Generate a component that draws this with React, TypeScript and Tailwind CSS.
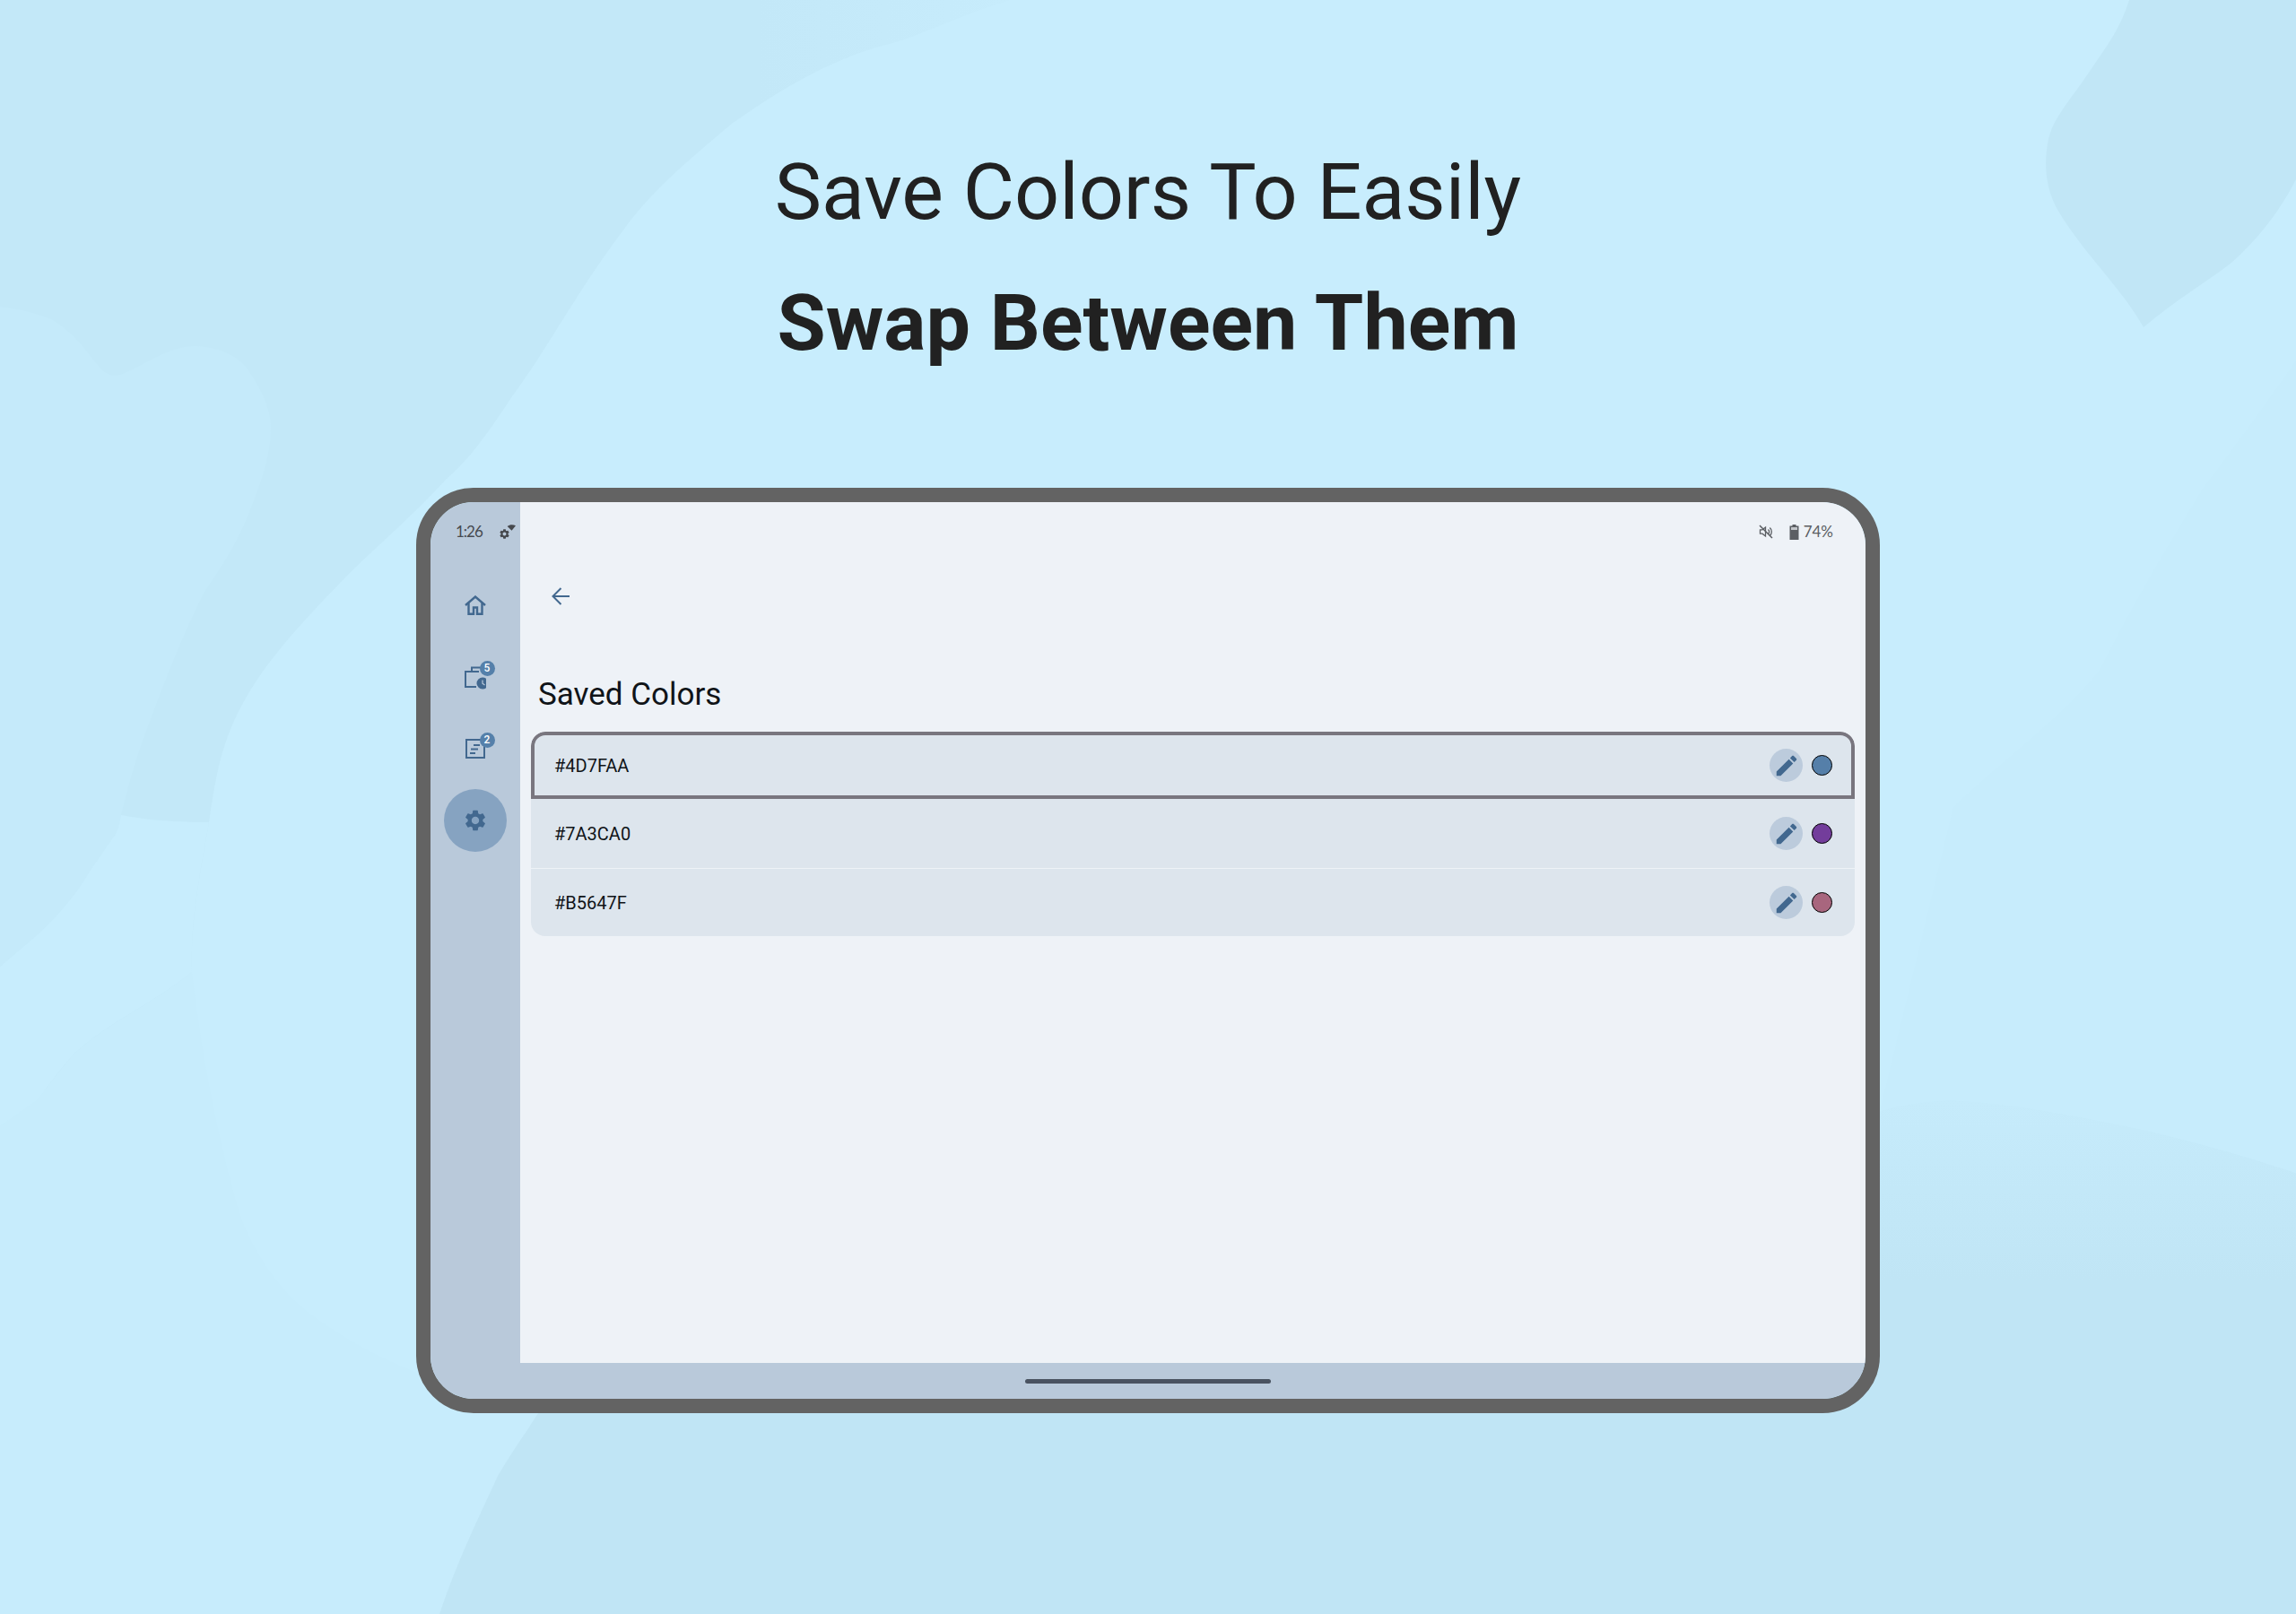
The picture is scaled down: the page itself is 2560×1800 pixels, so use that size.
import React from "react";

const savedColors = [
  { hex: "#4D7FAA", dot: "#557fa9", selected: true },
  { hex: "#7A3CA0", dot: "#733d9b", selected: false },
  { hex: "#B5647F", dot: "#a8667e", selected: false },
];

const GEAR_PATH =
  "M19.140 12.940c.04-.3.06-.61.06-.94 0-.32-.02-.64-.07-.94l2.030-1.580c.18-.14.23-.41.12-.61l-1.920-3.320c-.12-.22-.37-.29-.59-.22l-2.390.96c-.5-.38-1.030-.7-1.620-.94l-.36-2.540c-.04-.24-.24-.41-.48-.41h-3.840c-.24 0-.43.17-.47.41l-.36 2.540c-.59.24-1.130.57-1.620.94l-2.390-.96c-.22-.08-.47 0-.59.22L2.740 8.870c-.12.21-.08.47.12.61l2.030 1.580c-.05.3-.09.63-.09.94s.02.64.07.94l-2.030 1.580c-.18.14-.23.41-.12.61l1.920 3.320c.12.22.37.29.59.22l2.390-.96c.5.38 1.030.7 1.620.94l.36 2.540c.05.24.24.41.48.41h3.840c.24 0 .44-.17.47-.41l.36-2.540c.59-.24 1.130-.56 1.620-.94l2.390.96c.22.08.47 0 .59-.22l1.920-3.320c.12-.22.07-.47-.12-.61l-2.010-1.580zM12 15.600c-1.980 0-3.600-1.620-3.600-3.600s1.620-3.600 3.600-3.600 3.600 1.620 3.600 3.600-1.620 3.600-3.600 3.600z";

const Backdrop = () => (
  <svg className="absolute inset-0" width="2560" height="1800" viewBox="0 0 2560 1800">
    <defs>
      <linearGradient id="topLeft" x1="0" y1="0" x2="1" y2="0">
        <stop offset="0" stopColor="#c3e8f8" />
        <stop offset="0.75" stopColor="#c3e8f8" />
        <stop offset="1" stopColor="#c7ecfc" />
      </linearGradient>
      <linearGradient id="bottomRight" x1="0" y1="0" x2="0" y2="1">
        <stop offset="0" stopColor="#c6ebfb" />
        <stop offset="0.35" stopColor="#c0e5f5" />
        <stop offset="1" stopColor="#c0e5f5" />
      </linearGradient>
    </defs>
    {/* top left wave */}
    <path
      fill="url(#topLeft)"
      d="M0 0H1127C1060 20 1030 40 980 52C920 70 870 100 816 138C760 185 725 215 694 258C640 330 610 390 571 442C540 490 520 515 498 534C460 575 425 605 392 637C330 700 285 750 261 804C245 840 240 870 233 917C222 980 212 1030 214 1084L0 1256Z"
    />
    {/* left blob */}
    <path
      fill="#c5eafa"
      d="M0 342C25 345 42 350 57 356C85 372 98 395 114 413C122 420 130 420 139 416C165 405 190 385 220 386C250 388 268 400 277 413C295 440 302 460 302 476C302 510 290 540 277 574C262 610 245 635 228 660C200 715 180 770 163 815C150 850 142 880 135 909C132 925 130 930 126 934C115 950 108 960 98 975C80 1005 60 1025 41 1043L0 1078Z"
    />
    <path
      fill="#c8edfd"
      d="M135 909C165 915 200 917 233 917C222 980 212 1030 214 1084C170 1120 120 1140 82 1176C65 1195 55 1210 41 1227L0 1256V1078L41 1043C60 1025 80 1005 98 975C108 960 115 950 126 934C130 930 132 925 135 909Z"
    />
    {/* bottom wave */}
    <path
      fill="#c7ecfc"
      d="M0 1256L41 1227C55 1210 65 1195 82 1176C120 1140 170 1120 214 1084C225 1180 245 1280 269 1359C290 1410 315 1440 343 1463C385 1495 425 1515 465 1531L600 1576L560 1640L490 1800H0Z"
    />
    <path
      fill="url(#bottomRight)"
      d="M490 1800C510 1740 535 1690 555 1646C570 1620 585 1600 600 1576L1300 1400L2096 1239C2120 1232 2150 1227 2178 1227C2235 1230 2290 1240 2341 1250C2420 1265 2490 1285 2560 1308V1800Z"
    />
    {/* top right blob */}
    <path
      fill="#c1e6f6"
      d="M2374 0C2365 30 2350 50 2333 75C2310 110 2290 130 2284 155C2278 185 2282 210 2292 230C2320 280 2365 320 2390 365C2425 335 2460 315 2488 293C2520 265 2545 230 2560 200V0Z"
    />
    {/* faint right wave */}
    <path
      fill="#c7ecfc"
      d="M2560 402C2520 460 2490 500 2456 545C2410 620 2375 680 2342 746C2300 800 2230 850 2178 900L2096 1239C2120 1232 2150 1227 2178 1227C2235 1230 2290 1240 2341 1250C2420 1265 2490 1285 2560 1308Z"
    />
  </svg>
);

const NavRail = () => (
  <aside className="flex w-[100px] shrink-0 flex-col bg-[#b9c9da]">
    <div className="flex h-[66px] items-center justify-between pl-[28px] pr-[5px]">
      <span className="font-['Lato',sans-serif] text-[17px] tracking-[-1px] text-[#474a50]">1:26</span>
      <svg width="18" height="16" viewBox="0 0 18 16" fill="#45484d">
        <path d="M8.700 2C11 0 15-.2 18 1.200L13.500 6.700Z" />
        <svg x="0" y="5" width="11" height="11" viewBox="2.500 2 19 20">
          <path d={GEAR_PATH} />
        </svg>
      </svg>
    </div>
    <div className="h-[9px]" />
    <div className="flex h-20 items-center justify-center">
      <svg width="24" height="22" viewBox="0 0 24 22" fill="none" stroke="#42688f" strokeWidth="2.4">
        <path d="M1 11 12 1.500 23 11" />
        <path d="M4.500 8.500V20.800H10V13.500H14V20.800H19.500V8.500" />
      </svg>
    </div>
    <div className="flex h-20 items-center justify-center">
      <div className="relative h-[26px] w-[24px] translate-y-[1px]">
        <svg width="24" height="26" viewBox="0 0 24 26" fill="none" className="absolute left-0 top-0">
          <path d="M8 6V1.500H18M16 6H1V23H13" stroke="#42688f" strokeWidth="2" />
          <circle cx="20" cy="19" r="6.500" fill="#42688f" />
          <path d="M20 15.500V19.200L22.500 21" stroke="#b9c9da" strokeWidth="1.200" />
        </svg>
        <span className="absolute right-[-9.5px] top-[-6.5px] flex h-[17px] w-[17px] items-center justify-center rounded-full bg-[#5580aa] font-['Roboto',sans-serif] text-[12px] font-medium leading-none text-white">
          5
        </span>
      </div>
    </div>
    <div className="flex h-20 items-center justify-center">
      <div className="relative h-[22px] w-[22px]">
        <svg width="22" height="22" viewBox="0 0 22 22" fill="none" stroke="#42688f" strokeWidth="2" className="absolute left-0 top-0">
          <path d="M1 1H21V21H1Z" />
          <path d="M6 11.500H14M5 16H11M9 7H16" />
        </svg>
        <span className="absolute right-[-10.5px] top-[-7.5px] flex h-[17px] w-[17px] items-center justify-center rounded-full bg-[#5580aa] font-['Roboto',sans-serif] text-[12px] font-medium leading-none text-white">
          2
        </span>
      </div>
    </div>
    <div className="flex h-20 items-center justify-center">
      <div className="flex h-[70px] w-[70px] items-center justify-center rounded-full bg-[#86a3c1]">
        <svg width="28" height="28" viewBox="0 0 24 24" fill="#42688f">
          <path d={GEAR_PATH} />
        </svg>
      </div>
    </div>
  </aside>
);

const StatusIcons = () => (
  <div className="flex h-[66px] items-center justify-end pr-[36px] font-['Lato',sans-serif] text-[17px] text-[#5b5e63]">
    <svg width="16" height="16" viewBox="0 0 16 16" fill="none" stroke="#5b5e63" className="mr-[18px]">
      <path d="M1.500 5.800H4L7.500 3V13L4 10.200H1.500Z" strokeWidth="1.300" />
      <path d="M10.500 5.500C12 6.800 12 9.200 10.500 10.500M12.300 3.500C15 5.800 15 10.200 12.300 12.500" strokeWidth="1.300" />
      <path d="M1 1 15 15" strokeWidth="1.500" />
    </svg>
    <svg width="11" height="17" viewBox="0 0 11 17" fill="#5b5e63" className="mr-[5px]">
      <path d="M3.500 0H7.500V1.500H10.500V17H.5V1.500H3.500Z" />
      <rect x="2" y="3" width="7" height="3" fill="#c3c6ca" />
    </svg>
    <span>74%</span>
  </div>
);

const ColorRow = ({ hex, dot, selected }: { hex: string; dot: string; selected: boolean }) => (
  <div
    className={
      selected
        ? "flex h-[75px] items-center justify-between rounded-t-[16px] border-[4px] border-[#79767f] bg-[#dde5ed] pl-[22px] pr-[21px]"
        : "flex h-full items-center justify-between bg-[#dde5ed] pl-[26px] pr-[25px]"
    }
  >
    <span className="font-['Roboto',sans-serif] text-[20px] text-[#101418]">{hex}</span>
    <div className="flex items-center gap-[10px]">
      <span className="flex h-[37px] w-[37px] items-center justify-center rounded-full bg-[#bccbdc]">
        <svg width="30" height="30" viewBox="0 0 24 24" fill="#42688f">
          <path d="M3 17.250V21h3.750L17.810 9.940l-3.750-3.750L3 17.250zM20.710 7.040c.39-.39.39-1.020 0-1.410l-2.340-2.340c-.39-.39-1.020-.39-1.410 0l-1.830 1.830 3.750 3.750 1.830-1.830z" />
        </svg>
      </span>
      <span
        className="h-[23px] w-[23px] rounded-full border-[1.5px] border-black"
        style={{ backgroundColor: dot }}
      />
    </div>
  </div>
);

const SavedColors = () => (
  <main className="flex min-w-0 flex-1 flex-col bg-[#eef2f7]">
    <StatusIcons />
    <div className="flex h-[78px] items-center pl-[35px]">
      <svg width="20" height="20" viewBox="0 0 20 20" fill="none" stroke="#42688f" strokeWidth="2">
        <path d="M20 10H1.500M10.500 1 1.500 10 10.500 19" />
      </svg>
    </div>
    <h2 className="mt-[43px] flex h-[56px] items-end pl-[20px] font-['Roboto',sans-serif] text-[35px] font-normal leading-[56px] text-[#101418]">
      Saved Colors
    </h2>
    <div className="mx-[12px] mt-[13px] overflow-hidden rounded-[16px]">
      <ColorRow {...savedColors[0]} />
      <div className="h-[77px]">
        <ColorRow {...savedColors[1]} />
      </div>
      <div className="h-px bg-[#eef2f7]" />
      <div className="h-[75px]">
        <ColorRow {...savedColors[2]} />
      </div>
    </div>
  </main>
);

export default function App() {
  return (
    <div className="relative h-[1800px] w-[2560px] overflow-hidden bg-[#c8edfd]">
      <Backdrop />
      <div className="relative flex flex-col items-center">
        <h1 className="pt-[141px] text-center font-['Roboto',sans-serif] text-[88px] font-normal leading-[146px] text-[#212121]">
          Save Colors To Easily
        </h1>
        <h1 className="text-center font-['Roboto',sans-serif] text-[88px] font-bold leading-[146px] text-[#212121]">
          Swap Between Them
        </h1>
        <div className="mt-[111px] flex h-[1032px] w-[1632px] flex-col overflow-hidden rounded-[64px] border-[16px] border-[#636363]">
          <div className="flex min-h-0 flex-1">
            <NavRail />
            <SavedColors />
          </div>
          <div className="flex h-10 shrink-0 items-center justify-center bg-[#b9c9da]">
            <div className="h-[5px] w-[274px] rounded-full bg-[#4a5361]" />
          </div>
        </div>
      </div>
    </div>
  );
}
